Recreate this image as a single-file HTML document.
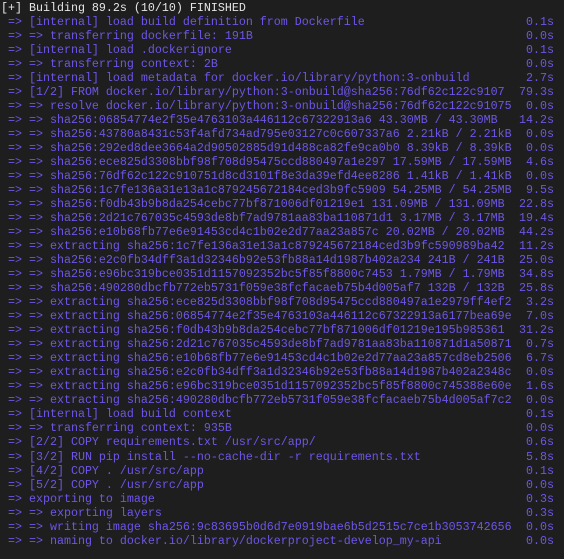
<!DOCTYPE html>
<html><head><meta charset="utf-8"><style>
html,body{margin:0;padding:0;background:#1e1e1e;width:564px;height:559px;overflow:hidden}
.w{position:absolute;left:1px;top:1px;font-family:"Liberation Mono",monospace;font-size:11.67px;}
.l{position:relative;height:14.03px;line-height:14.03px;white-space:pre;color:#6f55e8;width:560px}
.t{display:block;width:511px;overflow:hidden}
.r{position:absolute;right:7px;top:0}
.h{color:#e6e6e6}
</style></head><body><div class="w">
<div class="l h"><span class="t">[+] Building 89.2s (10/10) FINISHED</span></div>
<div class="l"><span class="t"> => [internal] load build definition from Dockerfile</span><span class="r">0.1s</span></div>
<div class="l"><span class="t"> => => transferring dockerfile: 191B</span><span class="r">0.0s</span></div>
<div class="l"><span class="t"> => [internal] load .dockerignore</span><span class="r">0.1s</span></div>
<div class="l"><span class="t"> => => transferring context: 2B</span><span class="r">0.0s</span></div>
<div class="l"><span class="t"> => [internal] load metadata for docker.io/library/python:3-onbuild</span><span class="r">2.7s</span></div>
<div class="l"><span class="t"> => [1/2] FROM docker.io/library/python:3-onbuild@sha256:76df62c122c9107</span><span class="r">79.3s</span></div>
<div class="l"><span class="t"> => => resolve docker.io/library/python:3-onbuild@sha256:76df62c122c91075</span><span class="r">0.0s</span></div>
<div class="l"><span class="t"> => => sha256:06854774e2f35e4763103a446112c67322913a6 43.30MB / 43.30MB</span><span class="r">14.2s</span></div>
<div class="l"><span class="t"> => => sha256:43780a8431c53f4afd734ad795e03127c0c607337a6 2.21kB / 2.21kB</span><span class="r">0.0s</span></div>
<div class="l"><span class="t"> => => sha256:292ed8dee3664a2d90502885d91d488ca82fe9ca0b0 8.39kB / 8.39kB</span><span class="r">0.0s</span></div>
<div class="l"><span class="t"> => => sha256:ece825d3308bbf98f708d95475ccd880497a1e297 17.59MB / 17.59MB</span><span class="r">4.6s</span></div>
<div class="l"><span class="t"> => => sha256:76df62c122c910751d8cd3101f8e3da39efd4ee8286 1.41kB / 1.41kB</span><span class="r">0.0s</span></div>
<div class="l"><span class="t"> => => sha256:1c7fe136a31e13a1c879245672184ced3b9fc5909 54.25MB / 54.25MB</span><span class="r">9.5s</span></div>
<div class="l"><span class="t"> => => sha256:f0db43b9b8da254cebc77bf871006df01219e1 131.09MB / 131.09MB</span><span class="r">22.8s</span></div>
<div class="l"><span class="t"> => => sha256:2d21c767035c4593de8bf7ad9781aa83ba110871d1 3.17MB / 3.17MB</span><span class="r">19.4s</span></div>
<div class="l"><span class="t"> => => sha256:e10b68fb77e6e91453cd4c1b02e2d77aa23a857c 20.02MB / 20.02MB</span><span class="r">44.2s</span></div>
<div class="l"><span class="t"> => => extracting sha256:1c7fe136a31e13a1c879245672184ced3b9fc590989ba42</span><span class="r">11.2s</span></div>
<div class="l"><span class="t"> => => sha256:e2c0fb34dff3a1d32346b92e53fb88a14d1987b402a234 241B / 241B</span><span class="r">25.0s</span></div>
<div class="l"><span class="t"> => => sha256:e96bc319bce0351d1157092352bc5f85f8800c7453 1.79MB / 1.79MB</span><span class="r">34.8s</span></div>
<div class="l"><span class="t"> => => sha256:490280dbcfb772eb5731f059e38fcfacaeb75b4d005af7 132B / 132B</span><span class="r">25.8s</span></div>
<div class="l"><span class="t"> => => extracting sha256:ece825d3308bbf98f708d95475ccd880497a1e2979ff4ef2</span><span class="r">3.2s</span></div>
<div class="l"><span class="t"> => => extracting sha256:06854774e2f35e4763103a446112c67322913a6177bea69e</span><span class="r">7.0s</span></div>
<div class="l"><span class="t"> => => extracting sha256:f0db43b9b8da254cebc77bf871006df01219e195b985361</span><span class="r">31.2s</span></div>
<div class="l"><span class="t"> => => extracting sha256:2d21c767035c4593de8bf7ad9781aa83ba110871d1a50871</span><span class="r">0.7s</span></div>
<div class="l"><span class="t"> => => extracting sha256:e10b68fb77e6e91453cd4c1b02e2d77aa23a857cd8eb2506</span><span class="r">6.7s</span></div>
<div class="l"><span class="t"> => => extracting sha256:e2c0fb34dff3a1d32346b92e53fb88a14d1987b402a2348c</span><span class="r">0.0s</span></div>
<div class="l"><span class="t"> => => extracting sha256:e96bc319bce0351d1157092352bc5f85f8800c745388e60e</span><span class="r">1.6s</span></div>
<div class="l"><span class="t"> => => extracting sha256:490280dbcfb772eb5731f059e38fcfacaeb75b4d005af7c2</span><span class="r">0.0s</span></div>
<div class="l"><span class="t"> => [internal] load build context</span><span class="r">0.1s</span></div>
<div class="l"><span class="t"> => => transferring context: 935B</span><span class="r">0.0s</span></div>
<div class="l"><span class="t"> => [2/2] COPY requirements.txt /usr/src/app/</span><span class="r">0.6s</span></div>
<div class="l"><span class="t"> => [3/2] RUN pip install --no-cache-dir -r requirements.txt</span><span class="r">5.8s</span></div>
<div class="l"><span class="t"> => [4/2] COPY . /usr/src/app</span><span class="r">0.1s</span></div>
<div class="l"><span class="t"> => [5/2] COPY . /usr/src/app</span><span class="r">0.0s</span></div>
<div class="l"><span class="t"> => exporting to image</span><span class="r">0.3s</span></div>
<div class="l"><span class="t"> => => exporting layers</span><span class="r">0.3s</span></div>
<div class="l"><span class="t"> => => writing image sha256:9c83695b0d6d7e0919bae6b5d2515c7ce1b3053742656</span><span class="r">0.0s</span></div>
<div class="l"><span class="t"> => => naming to docker.io/library/dockerproject-develop_my-api</span><span class="r">0.0s</span></div>
</div></body></html>
